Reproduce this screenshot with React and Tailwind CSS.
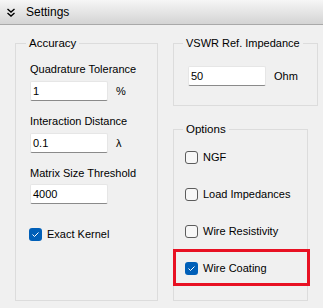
import { useState } from 'react'

function ChevronsDown() {
  return (
    <svg width="10" height="9" viewBox="0 0 10 9" fill="none" stroke="#000" strokeWidth="1.4">
      <path d="M1.5 1 L5 4 L8.5 1" />
      <path d="M1.5 5 L5 8 L8.5 5" />
    </svg>
  )
}

function Check({ checked }) {
  if (checked) {
    return (
      <span className="flex items-center justify-center w-[13px] h-[13px] rounded-[3px] bg-[#005fb8] shrink-0">
        <svg width="9" height="7" viewBox="0 0 9 7" fill="none" stroke="#fff" strokeWidth="1">
          <path d="M1.5 3.5 L3.5 5.5 L7.5 1.5" />
        </svg>
      </span>
    )
  }
  return <span className="block w-[13px] h-[13px] rounded-[3px] border border-[#5c5c5c] bg-[#f7f7f7] shrink-0" />
}

function Field({ value, unit }) {
  return (
    <div className="flex items-center gap-[8px]">
      <div className="w-[78px] h-[20px] bg-white border border-[#e6e6e6] border-b-[#8a8a8a] rounded-[2px] px-[2px] flex items-center leading-none">
        {value}
      </div>
      <span>{unit}</span>
    </div>
  )
}

export default function App() {
  const [opts, setOpts] = useState({ ngf: false, load: false, res: false, coat: true })
  const [exact, setExact] = useState(true)

  const rows = [
    ['ngf', 'NGF'],
    ['load', 'Load Impedances'],
    ['res', 'Wire Resistivity'],
    ['coat', 'Wire Coating'],
  ]

  return (
    <div className="w-[323px] h-[308px] bg-[#f0f0f0] text-black text-[11px] whitespace-nowrap overflow-hidden" style={{ fontFamily: '"Segoe UI", "Liberation Sans", Arial, sans-serif' }}>
      {/* Header */}
      <div className="h-[25px] flex items-center gap-[10px] pl-[6px] bg-gradient-to-b from-[#f6f6f6] to-[#d4d4d4] border-b border-[#a9a9a9]">
        <ChevronsDown />
        <span className="text-[12px]">Settings</span>
      </div>

      <div className="flex gap-[15px] pl-[15px] pt-[10px]">
        {/* Accuracy */}
        <fieldset className="w-[143px] h-[266px] border border-[#dcdcdc] px-[14px]">
          <legend className="ml-[-4px] px-[3px] leading-[16px] text-[11.5px]">Accuracy</legend>
          <div className="mt-[10px] leading-[16px]">Quadrature Tolerance</div>
          <div className="mt-[4px]"><Field value="1" unit="%" /></div>
          <div className="mt-[12px] leading-[16px]">Interaction Distance</div>
          <div className="mt-[4px]"><Field value="0.1" unit="λ" /></div>
          <div className="mt-[12px] leading-[16px]">Matrix Size Threshold</div>
          <div className="mt-[3px]"><Field value="4000" unit="" /></div>
          <button onClick={() => setExact(!exact)} className="mt-[22px] ml-[-1px] flex items-center gap-[5px] leading-[16px]">
            <Check checked={exact} />
            <span>Exact Kernel</span>
          </button>
        </fieldset>

        <div className="flex flex-col gap-[15px] w-[135px]">
          {/* VSWR */}
          <fieldset className="h-[71px] border border-[#dcdcdc] px-[14px]">
            <legend className="ml-[-5px] px-[3px] leading-[16px]">VSWR Ref. Impedance</legend>
            <div className="mt-[15px]"><Field value="50" unit="Ohm" /></div>
          </fieldset>

          {/* Options */}
          <fieldset className="h-[180px] border border-[#dcdcdc] pl-[11px]">
            <legend className="ml-[-2px] px-[3px] leading-[16px] text-[11.5px]">Options</legend>
            <div className="pt-[2px]">
              {rows.map(([k, label]) => (
                <button
                  key={k}
                  onClick={() => setOpts({ ...opts, [k]: !opts[k] })}
                  className="relative flex items-center gap-[5px] h-[37px] w-full"
                >
                  <Check checked={opts[k]} />
                  <span>{label}</span>
                  {k === 'coat' && (
                    <span className="absolute left-[-12px] right-[-3px] top-[-1px] bottom-[1px] border-[3px] border-[#e81123]" />
                  )}
                </button>
              ))}
            </div>
          </fieldset>
        </div>
      </div>
    </div>
  )
}
